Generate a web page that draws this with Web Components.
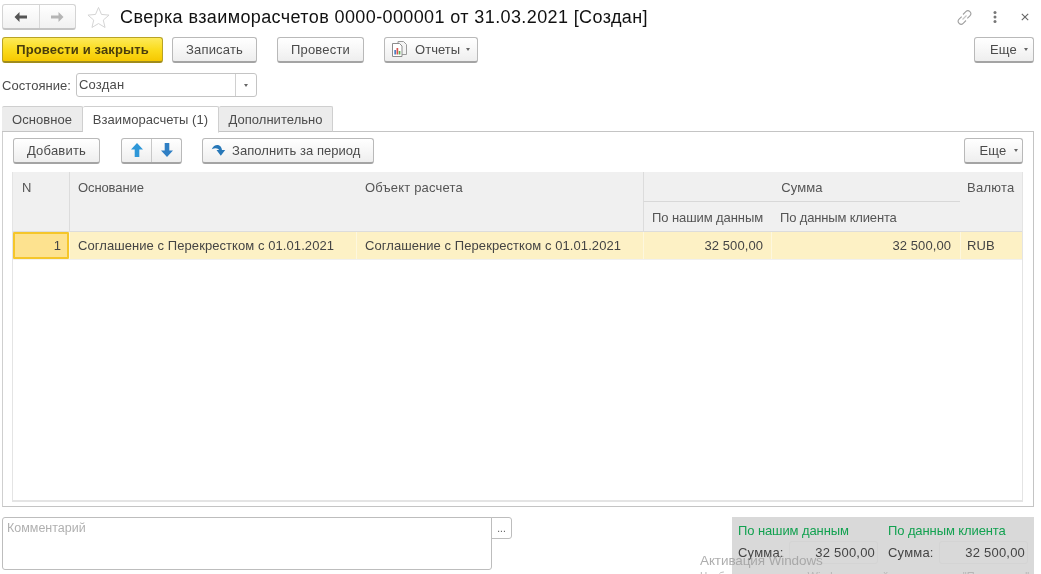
<!DOCTYPE html>
<html lang="ru">
<head>
<meta charset="utf-8">
<title>Сверка взаиморасчетов</title>
<style>
  html, body { margin: 0; height: 100%; background: #fff; overflow: hidden; }
  body { font: 13px "Liberation Sans", Arial, sans-serif; color: #4b4b4b; }
</style>
</head>
<body>
<recon-form></recon-form>

<script>
class UiButton extends HTMLElement {
  constructor() {
    super();
    this.shadowDOM = this.attachShadow({mode: "open"});
    this.shadowDOM.innerHTML = `
      <style>
        :host {
          display: inline-flex;
          align-items: center;
          justify-content: center;
          gap: 7px;
          box-sizing: border-box;
          height: 26px;
          padding: 0 0 1px;
          border: 1px solid #b9b9b9;
          border-bottom: 2px solid #a4a4a4;
          border-radius: 3px;
          background: linear-gradient(#ffffff, #f6f6f6 55%, #eeeeee);
          color: #4b4b4b;
          font-size: 13px;
          letter-spacing: .2px;
          white-space: nowrap;
        }
        :host([primary]) {
          border-color: #b8a326;
          border-bottom-color: #a08c1c;
          background: linear-gradient(#fdea5a, #fbdc1e 50%, #f6c800);
          color: #4a3d0c;
          font-weight: bold;
          letter-spacing: .13px;
        }
        .caret { display: none; width: 0; height: 0; border: 2.5px solid transparent; border-top: 3px solid #666; border-bottom: 0; }
        :host([menu]) .caret { display: block; }
      </style>
      <slot name="icon"></slot><slot></slot><span class="caret"></span>`;
  }
}
customElements.define("ui-button", UiButton);

class DocHeader extends HTMLElement {
  constructor() {
    super();
    this.shadowDOM = this.attachShadow({mode: "open"});
    this.shadowDOM.innerHTML = `
      <style>
        :host { display: flex; align-items: center; height: 26px; padding: 4px 0 0 2px; }
        .nav {
          display: flex; box-sizing: border-box; width: 74px; height: 26px;
          border: 1px solid #d4d4d4; border-bottom: 2px solid #c4c4c4; border-radius: 3px;
          background: linear-gradient(#fff, #f1f1f1);
        }
        .nav span { flex: 1; display: flex; align-items: center; justify-content: center; }
        .nav span + span { border-left: 1px solid #d8d8d8; }
        .star { margin: 0 10px 0 11px; }
        h1 {
          flex: 1; margin: 0; color: #111; font-size: 18px; font-weight: normal;
          letter-spacing: .39px; white-space: nowrap;
        }
        .tools { display: flex; align-items: center; padding-right: 12px; }
        .tools svg { display: block; }
      </style>
      <div class="nav">
        <span><svg width="15" height="12" viewBox="0 0 15 12"><path d="M6.500 1 1.500 6l5 5V7.500H14v-3H6.500z" fill="#555"/></svg></span>
        <span><svg width="15" height="12" viewBox="0 0 15 12"><path d="M8.500 1l5 5-5 5V7.500H1v-3h7.500z" fill="#b5b5b5"/></svg></span>
      </div>
      <svg class="star" width="23" height="23" viewBox="0 0 24 24"><path d="M12 1.500l3.100 7.300 7.900.7-6 5.200 1.800 7.700L12 18.300l-6.800 4.100L7 14.700 1 9.500l7.900-.7z" fill="#fff" stroke="#d2d2d2"/></svg>
      <h1><slot></slot></h1>
      <div class="tools">
        <svg width="17" height="17" viewBox="0 0 17 17" fill="none" stroke="#a0a0a0" stroke-width="1.100"><path d="M7 5.500 9.800 2.700a2.900 2.900 0 0 1 4.100 0 2.900 2.900 0 0 1 0 4.100L11.300 9.400"/><path d="M10 11.500 7.200 14.300a2.900 2.900 0 0 1-4.100 0 2.900 2.900 0 0 1 0-4.100L5.700 7.600"/><path d="M6.500 10.500l4-4" stroke="#c4c4c4"/></svg>
        <svg style="margin-left:20px" width="4" height="14" viewBox="0 0 4 14" fill="#777"><circle cx="2" cy="2.500" r="1.500"/><circle cx="2" cy="7" r="1.500"/><circle cx="2" cy="11.500" r="1.500"/></svg>
        <svg style="margin-left:24px" width="8" height="8" viewBox="0 0 8 8" stroke="#666" stroke-width="1.100"><path d="M.8.8l6.400 6.400M7.200.8.800 7.200"/></svg>
      </div>`;
  }
}
customElements.define("doc-header", DocHeader);

class StateField extends HTMLElement {
  constructor() {
    super();
    this.shadowDOM = this.attachShadow({mode: "open"});
    this.shadowDOM.innerHTML = `
      <style>
        :host { display: flex; align-items: center; height: 24px; padding-left: 2px; letter-spacing: .05px; }
        .label { width: 74px; }
        .field {
          display: flex; box-sizing: border-box; width: 181px; height: 24px;
          border: 1px solid #c4c4c4; border-radius: 3px; background: #fff;
        }
        .value { flex: 1; padding-left: 2px; line-height: 22px; letter-spacing: .2px; }
        .drop { width: 20px; border-left: 1px solid #d0d0d0; display: flex; align-items: center; justify-content: center; }
        .drop i { width: 0; height: 0; border: 2.5px solid transparent; border-top: 3px solid #666; border-bottom: 0; }
      </style>
      <span class="label">${this.getAttribute("label")}</span>
      <div class="field"><span class="value"><slot></slot></span><span class="drop"><i></i></span></div>`;
  }
}
customElements.define("state-field", StateField);

class TabBar extends HTMLElement {
  constructor() {
    super();
    this.shadowDOM = this.attachShadow({mode: "open"});
    let tabs = JSON.parse(this.getAttribute("tabs"));
    let active = Number(this.getAttribute("active"));
    let isi = "";
    tabs.forEach((t, i) => {
      isi += `<span class="tab${i == active ? " on" : ""}" style="width:${t.w}px">${t.text}</span>`;
    });
    this.shadowDOM.innerHTML = `
      <style>
        :host { display: flex; height: 26px; padding-left: 2px; letter-spacing: .05px; position: relative; z-index: 1; }
        .tab {
          box-sizing: border-box; height: 26px; line-height: 25px; text-align: center;
          border: 1px solid #cfcfcf; border-left: 0; border-bottom: 1px solid #c4c4c4;
          background: #ececec; border-radius: 2px 2px 0 0; white-space: nowrap;
        }
        .tab:first-child { border-left: 1px solid #cfcfcf; padding-left: 1px; }
        .tab.on { background: #fff; border-bottom-color: #fff; height: 27px; }
      </style>
      ${isi}`;
  }
}
customElements.define("tab-bar", TabBar);

class DataGrid extends HTMLElement {
  constructor() {
    super();
    this.shadowDOM = this.attachShadow({mode: "open"});
    this.shadowDOM.innerHTML = `
      <style>
        :host {
          display: block; box-sizing: border-box; height: 330px; margin: 8px 0 0 -1px;
          border: 1px solid #e4e4e4; border-bottom: 2px solid #e4e4e4; border-top: 0;
          background: #fff; letter-spacing: .07px;
        }
        .grid {
          display: grid;
          grid-template-columns: 56px 287px 287px 128px 189px 1fr;
          grid-template-rows: 30px 29px 1px 27px 1px;
        }
        .h { background: #f0f0f0; padding: 8px 0 0 8px; white-space: nowrap; color: #555; }
        .span2 { grid-row: span 2; }
        .bl { border-left: 1px solid #dcdcdc; }
        .sum { grid-column: span 2; text-align: center; border-bottom: 1px solid #d8d8d8; padding-left: 0; letter-spacing: .1px; }
        .line { grid-column: 1 / -1; background: #dcdcdc; }
        .c {
          background: #fdf1c5; line-height: 28px; padding: 0 8px; white-space: nowrap; color: #444;
          border-left: 1px solid #fdf7de; overflow: hidden;
        }
        .c.first {
          box-sizing: border-box; border: 2px solid #f5c62a; background: #fde28f;
          line-height: 24px; text-align: right; padding: 0 6px; border-radius: 1px;
        }
        .r { text-align: right; }
      </style>
      <div class="grid">
        <div class="h span2" style="padding-left:9px">N</div>
        <div class="h span2 bl" style="letter-spacing:-.1px">Основание</div>
        <div class="h span2" style="padding-left:9px;letter-spacing:.18px">Объект расчета</div>
        <div class="h sum bl">Сумма</div>
        <div class="h span2" style="padding-left:7px;letter-spacing:.25px">Валюта</div>
        <div class="h bl" style="letter-spacing:-.08px">По нашим данным</div>
        <div class="h" style="padding-left:9px;letter-spacing:-.16px">По данным клиента</div>
        <div class="line"></div>
        <div class="c first">1</div>
        <div class="c">Соглашение с Перекрестком с 01.01.2021</div>
        <div class="c">Соглашение с Перекрестком с 01.01.2021</div>
        <div class="c r">32 500,00</div>
        <div class="c r" style="padding-right:9px">32 500,00</div>
        <div class="c" style="padding-left:6px">RUB</div>
        <div class="line" style="background:#f0f0f0"></div>
      </div>`;
  }
}
customElements.define("data-grid", DataGrid);

class CommentBox extends HTMLElement {
  constructor() {
    super();
    this.shadowDOM = this.attachShadow({mode: "open"});
    this.shadowDOM.innerHTML = `
      <style>
        :host { display: flex; align-items: flex-start; width: 510px; }
        .area {
          box-sizing: border-box; width: 490px; height: 53px; padding: 3px 4px;
          border: 1px solid #bdbdbd; border-radius: 3px 0 3px 3px; color: #b0b0b0; font-size: 12.5px;
        }
        .more {
          box-sizing: border-box; width: 21px; height: 22px; margin-left: -1px; text-align: center;
          border: 1px solid #bdbdbd; border-radius: 0 3px 3px 0; color: #555; line-height: 21px; font-size: 10px;
        }
      </style>
      <div class="area"><slot></slot></div>
      <div class="more">...</div>`;
  }
}
customElements.define("comment-box", CommentBox);

class TotalsPanel extends HTMLElement {
  constructor() {
    super();
    this.shadowDOM = this.attachShadow({mode: "open"});
    this.shadowDOM.innerHTML = `
      <style>
        :host {
          display: grid; grid-template-columns: 140px 140px; column-gap: 10px; align-content: start; box-sizing: border-box;
          width: 302px; height: 57px; padding: 6px 0 0 6px; background: #d9d9d9; letter-spacing: .2px; color: #444;
        }
        .t { color: #12a150; line-height: 16px; margin-bottom: 2px; white-space: nowrap; letter-spacing: -.1px; }
        .row { display: flex; align-items: center; height: 23px; white-space: nowrap; }
        .v {
          flex: 1; box-sizing: border-box; height: 23px; line-height: 22px; margin-left: 5px; text-align: right; padding-right: 2px;
          border: 1px solid #d4d4d4; border-radius: 3px;
        }
      </style>
      <div class="t">По нашим данным</div>
      <div class="t">По данным клиента</div>
      <div class="row">Сумма:<span class="v">32 500,00</span></div>
      <div class="row">Сумма:<span class="v">32 500,00</span></div>`;
  }
}
customElements.define("totals-panel", TotalsPanel);

class ReconForm extends HTMLElement {
  constructor() {
    super();
    this.shadowDOM = this.attachShadow({mode: "open"});
    this.shadowDOM.innerHTML = `
      <style>
        :host { display: block; position: relative; width: 1041px; height: 574px; overflow: hidden; filter: blur(.3px); }
        .bar { display: flex; align-items: flex-start; }
        .main { margin-top: 7px; padding-left: 2px; padding-right: 7px; }
        .state { margin-top: 10px; }
        .tabs { margin-top: 9px; }
        .panel {
          box-sizing: border-box; height: 376px; margin: -1px 7px 0 2px; padding: 6px 10px 0;
          border: 1px solid #c4c4c4; border-left-color: #cfcfcf;
        }
        .spacer { flex: 1; }
        .pair { display: flex; box-sizing: border-box; width: 61px; height: 26px;
          border: 1px solid #b9b9b9; border-bottom: 2px solid #a4a4a4; border-radius: 3px;
          background: linear-gradient(#fff, #f6f6f6 55%, #eee); }
        .pair span { flex: 1; display: flex; align-items: center; justify-content: center; padding-bottom: 1px; }
        .pair span + span { border-left: 1px solid #c8c8c8; }
        .bottom { display: flex; justify-content: space-between; align-items: flex-start; margin: 10px 7px 0 2px; }
        .mark { position: absolute; left: 700px; top: 552px; color: #a0a0a0; font-size: 13.5px; letter-spacing: -.1px; line-height: 17px; white-space: nowrap; pointer-events: none; opacity: .85; }
        .mark small { display: block; font-size: 11px; line-height: 14px; color: #b0b0b0; letter-spacing: 0; }
      </style>

      <doc-header>Сверка взаиморасчетов 0000-000001 от 31.03.2021 [Создан]</doc-header>

      <div class="bar main">
        <ui-button primary style="width:161px">Провести и закрыть</ui-button>
        <ui-button style="width:85px;margin-left:9px">Записать</ui-button>
        <ui-button style="width:87px;margin-left:20px">Провести</ui-button>
        <ui-button menu style="width:94px;margin-left:20px;justify-content:flex-start;padding-left:6px;gap:6px;letter-spacing:.05px">
          <svg slot="icon" width="18" height="18" viewBox="0 0 18 18"><path d="M7 1.500h5.500l3 3v10H7z" fill="#f4f4f4" stroke="#9a9a9a"/><path d="M1.500 3.500h7l2.500 2.500v10.500H1.500z" fill="#fff" stroke="#8c8c8c"/><path d="M3.300 10h1.700v4.500H3.300z" fill="#4f7fc0"/><path d="M5.500 8h1.700v6.500H5.500z" fill="#d9534f"/><path d="M7.700 11h1.700v3.500H7.700z" fill="#5cae55"/></svg>
          Отчеты
        </ui-button>
        <span class="spacer"></span>
        <ui-button menu style="width:60px;padding-left:10px">Еще</ui-button>
      </div>

      <state-field class="state" label="Состояние:">Создан</state-field>

      <tab-bar class="tabs" active="1" tabs='[{"text":"Основное","w":81},{"text":"Взаиморасчеты (1)","w":136},{"text":"Дополнительно","w":114}]'></tab-bar>

      <div class="panel">
        <div class="bar">
          <ui-button style="width:87px">Добавить</ui-button>
          <div class="pair" style="margin-left:21px">
            <span><svg width="14" height="16" viewBox="0 0 14 16"><path d="M7 1l6 6.500H9.300V15H4.700V7.500H1z" fill="#2e97d8"/></svg></span>
            <span><svg width="14" height="16" viewBox="0 0 14 16"><path d="M7 15l6-6.500H9.300V1H4.700v7.500H1z" fill="#2f7fc4"/></svg></span>
          </div>
          <ui-button style="width:172px;margin-left:20px;justify-content:flex-start;padding-left:8px;gap:5px;letter-spacing:.05px">
            <svg slot="icon" width="16" height="14" viewBox="0 0 16 14"><path d="M.8 6.200C2.500 1.600 7.500.6 9.800 3.800c.6.900 1 1.900 1.200 3.200h3.200L9.800 12.800 5.500 7H8C7.200 5 4.200 4.400.8 6.200z" fill="#2878b8"/></svg>
            Заполнить за период
          </ui-button>
          <span class="spacer"></span>
          <ui-button menu style="width:59px;padding-left:10px">Еще</ui-button>
        </div>
        <data-grid></data-grid>
      </div>

      <div class="bottom">
        <comment-box>Комментарий</comment-box>
        <totals-panel></totals-panel>
      </div>

      <div class="mark">Активация Windows<small>Чтобы активировать Windows, перейдите в раздел "Параметры".</small></div>`;
  }
}
customElements.define("recon-form", ReconForm);
</script>
</body>
</html>
